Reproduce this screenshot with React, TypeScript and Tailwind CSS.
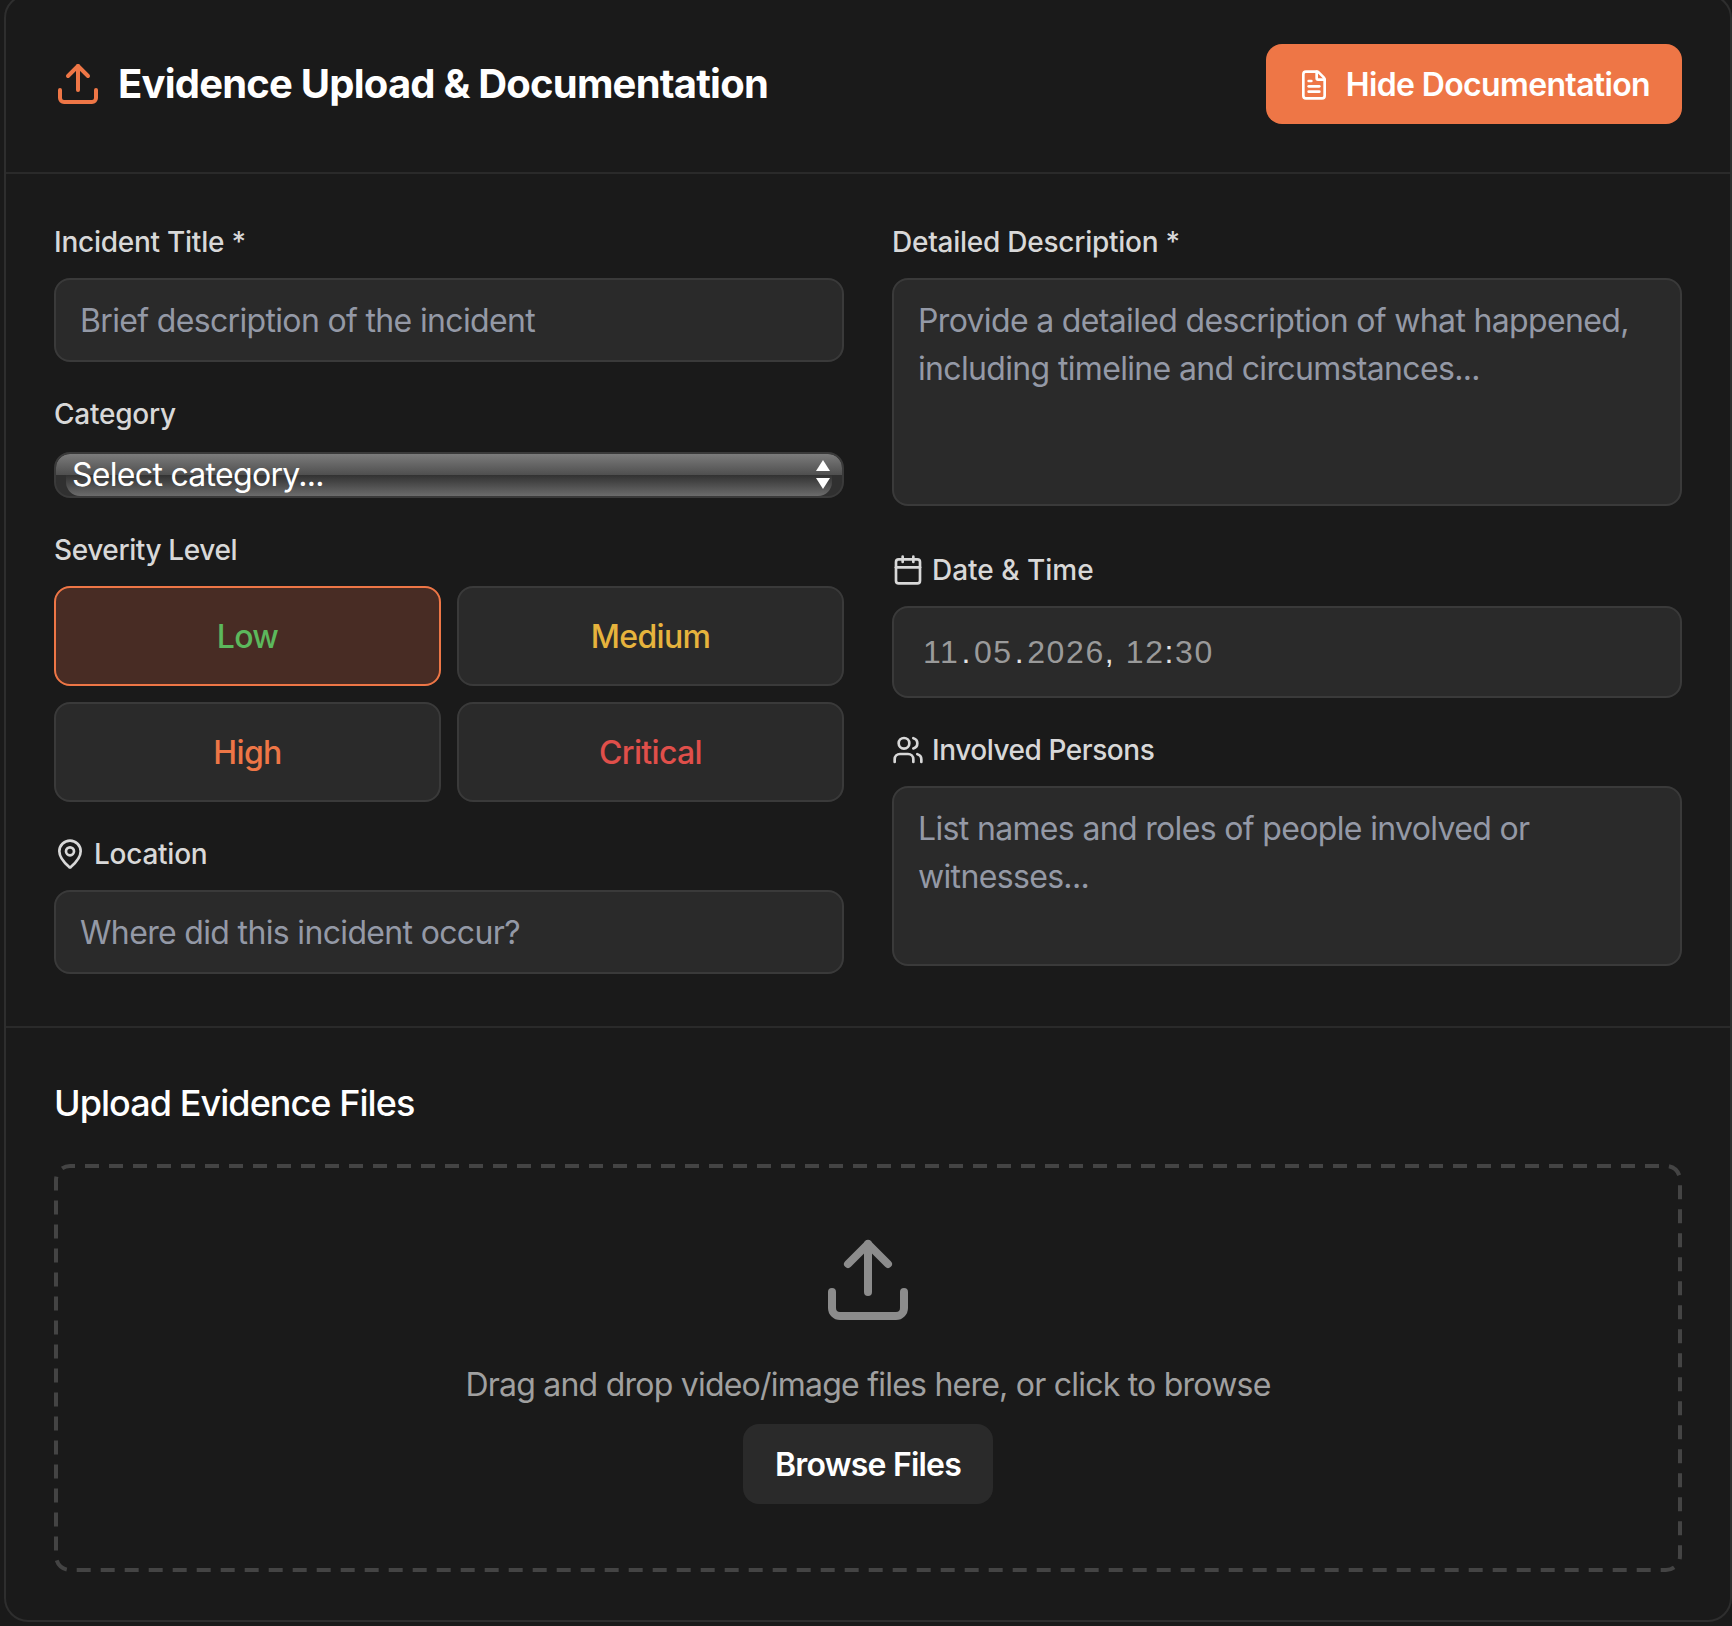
import { Calendar, FileText, MapPin, Upload, Users } from 'lucide-react';

const severityLevels = [
  { label: 'Low', color: 'text-[#5cb85c]', active: true },
  { label: 'Medium', color: 'text-[#e6b33d]', active: false },
  { label: 'High', color: 'text-[#ee7646]', active: false },
  { label: 'Critical', color: 'text-[#e04f4a]', active: false },
];

const fieldClass =
  'block w-full bg-[#2a2a2a] border-2 border-[#3a3a3a] rounded-2xl px-6 text-[32px] tracking-[-0.66px] text-white placeholder:text-[#9499a6] outline-none';

function Label({ icon, text, tracking = 'tracking-[-0.25px]' }: { icon?: React.ReactNode; text: string; tracking?: string }) {
  return (
    <label className={`flex items-center gap-2 mb-4 text-[28px] leading-[40px] font-medium text-[#d8d8d8] ${tracking}`}>
      {icon}
      {text}
    </label>
  );
}

function CategorySelect() {
  return (
    <div className="relative mt-[18px] h-[46px] rounded-2xl border-2 border-[#3a3a3a] bg-[#303030] overflow-hidden">
      {/* native glossy select look */}
      <div className="absolute inset-x-0 top-0 h-[21px] rounded-t-[14px] bg-gradient-to-b from-[#7c7c7c] to-[#4f4f4f]" />
      <div className="absolute left-[10px] right-[10px] bottom-0 h-[21px] rounded-b-[14px] bg-gradient-to-b from-[#323232] to-[#6c6c6c]" />
      <select className="relative block w-full h-full appearance-none bg-transparent pl-4 pr-10 text-[32px] leading-[42px] tracking-[-0.7px] text-white outline-none">
        <option>Select category...</option>
      </select>
      <svg className="absolute right-[11px] top-[5px] w-[16px] h-[32px] pointer-events-none" viewBox="0 0 16 32" fill="#ffffff">
        <path d="M8 1 15 12H1z" />
        <path d="M1 19H15L8 30z" />
      </svg>
    </div>
  );
}

export default function App() {
  return (
    <div className="min-h-screen bg-[#1a1a1a] pl-1 overflow-hidden font-['Inter',sans-serif]">
      <div className="-mt-[6px] w-[1728px] bg-[#1a1a1a] border-2 border-[#2e2e2e] rounded-3xl">
        {/* Header */}
        <div className="flex items-center justify-between p-12 border-b-2 border-[#2a2a2a]">
          <div className="flex items-center gap-4">
            <Upload className="w-12 h-12 text-[#ee7646]" />
            <h2 className="text-[40px] leading-[56px] tracking-[-0.79px] font-bold text-white">Evidence Upload &amp; Documentation</h2>
          </div>
          <button className="flex items-center gap-4 h-20 pt-[2px] px-8 rounded-2xl bg-[#ee7646] text-[32px] tracking-[-0.65px] font-semibold text-white">
            <FileText className="w-8 h-8" />
            Hide Documentation
          </button>
        </div>

        {/* Form */}
        <div className="grid grid-cols-2 gap-12 p-12 border-b-2 border-[#2a2a2a]">
          <div className="flex flex-col gap-8">
            <div>
              <Label text="Incident Title *" />
              <input className={`${fieldClass} h-[84px]`} placeholder="Brief description of the incident" />
            </div>
            <div>
              <label className="block text-[28px] leading-[40px] tracking-[-0.25px] font-medium text-[#d8d8d8]">Category</label>
              <CategorySelect />
            </div>
            <div>
              <Label text="Severity Level" tracking="tracking-[-0.4px]" />
              <div className="grid grid-cols-2 gap-4">
                {severityLevels.map((level) => (
                  <button
                    key={level.label}
                    className={`h-[100px] pt-[2px] rounded-2xl border-2 text-[32px] tracking-[-0.65px] font-medium ${level.color} ${
                      level.active ? 'bg-[#482c24] border-[#ee7646]' : 'bg-[#2a2a2a] border-[#3a3a3a]'
                    }`}
                  >
                    {level.label}
                  </button>
                ))}
              </div>
            </div>
            <div>
              <Label icon={<MapPin className="w-8 h-8" />} text="Location" />
              <input className={`${fieldClass} h-[84px]`} placeholder="Where did this incident occur?" />
            </div>
          </div>

          <div className="flex flex-col gap-8">
            <div>
              <Label text="Detailed Description *" />
              <textarea
                className={`${fieldClass} h-[228px] mb-3 py-[17px] leading-[48px] resize-none`}
                placeholder="Provide a detailed description of what happened, including timeline and circumstances..."
              />
            </div>
            <div>
              <Label icon={<Calendar className="w-8 h-8" />} text="Date & Time" tracking="tracking-[0px]" />
              <div className="flex items-center h-[92px] pl-[29px] bg-[#2a2a2a] border-2 border-[#3a3a3a] rounded-2xl font-['Liberation_Sans',sans-serif] text-[32px] tracking-[1.6px] text-[#9a9a9a]">
                11<span className="px-[2px] text-[#e4e4e4]">.</span>05<span className="px-[2px] text-[#e4e4e4]">.</span>2026
                <span className="text-[#e4e4e4] whitespace-pre">, </span>12<span className="text-[#e4e4e4]">:</span>30
              </div>
            </div>
            <div>
              <Label icon={<Users className="w-8 h-8" />} text="Involved Persons" tracking="tracking-[-0.45px]" />
              <textarea
                className={`${fieldClass} h-[180px] mb-3 py-[17px] leading-[48px] resize-none`}
                placeholder="List names and roles of people involved or witnesses..."
              />
            </div>
          </div>
        </div>

        {/* Upload */}
        <div className="p-12">
          <h3 className="mb-8 h-[56px] text-[36px] leading-[54px] tracking-[-0.95px] font-medium text-white">Upload Evidence Files</h3>
          <div className="relative flex flex-col items-center p-16 border-4 border-transparent">
            {/* dashed outline, longer dashes than border-dashed gives */}
            <svg className="absolute -inset-1 w-[1628px] h-[408px] pointer-events-none" viewBox="0 0 1628 408" fill="none">
              <rect x="2" y="2" width="1624" height="404" rx="14" stroke="#444444" strokeWidth="4" strokeDasharray="14 10" strokeDashoffset="9" />
            </svg>
            <Upload className="w-24 h-24 mb-8 text-[#8c8c8c]" />
            <p className="mb-4 h-12 pt-px text-[32px] leading-[48px] tracking-[-0.77px] text-[#a0a0a0]">
              Drag and drop video/image files here, or click to browse
            </p>
            <button className="h-20 pt-[2px] px-8 rounded-2xl bg-[#2a2a2a] text-[32px] tracking-[-0.8px] font-semibold text-white">Browse Files</button>
          </div>
        </div>
      </div>
    </div>
  );
}
